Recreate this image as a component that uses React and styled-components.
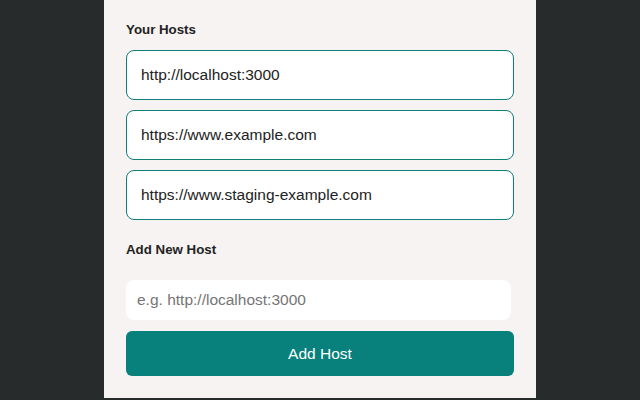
import React, { useState } from 'react';
import styled, { createGlobalStyle } from 'styled-components';

const GlobalStyle = createGlobalStyle`
body {
    margin: 0;
    background: #272b2c;
    font-family: "Liberation Sans", Arial, sans-serif;
}
`

export default function App() {
    const [hosts, setHosts] = useState([
        'http://localhost:3000',
        'https://www.example.com',
        'https://www.staging-example.com',
    ]);
    const [newHost, setNewHost] = useState('');

    const handleAdd = () => {
        if (!newHost) return
        setHosts([...hosts, newHost]);
        setNewHost('');
    };

    return (
        <>
            <GlobalStyle />
            <Panel>
                <SectionLabel>Your Hosts</SectionLabel>
                <HostList>
                    {hosts.map((host, index) => (
                        <HostItem key={index}>{host}</HostItem>
                    ))}
                </HostList>
                <SectionLabel spaced>Add New Host</SectionLabel>
                <HostInput
                    placeholder="e.g. http://localhost:3000"
                    value={newHost}
                    onChange={(e) => setNewHost(e.target.value)}
                />
                <AddButton onClick={handleAdd}>Add Host</AddButton>
            </Panel>
        </>
    )
}

const Panel = styled.div`
width: 432px;
height: 398px;
box-sizing: border-box;
margin: 0 auto;
padding: 20px 22px 22px;
background: #f7f3f2;
display: flex;
flex-direction: column;
`

const SectionLabel = styled.div`
font-size: 13.3px;
font-weight: 700;
line-height: 20px;
color: #222;
margin-top: ${props => props.spaced ? '20px' : '0'};
margin-bottom: ${props => props.spaced ? '20px' : '10px'};
`

const HostList = styled.div`
display: flex;
flex-direction: column;
gap: 10px;
`

const HostItem = styled.div`
height: 50px;
box-sizing: border-box;
display: flex;
align-items: center;
padding: 0 14px;
background: #fff;
border: 1px solid #0f7f7c;
border-radius: 8px;
font-size: 15.5px;
color: #222;
`

const HostInput = styled.input`
width: 385px;
height: 40px;
box-sizing: border-box;
padding: 0 11px;
border: none;
border-radius: 8px;
background: #fff;
font-family: "Liberation Sans", Arial, sans-serif;
font-size: 15.5px;
color: #222;
outline: none;

::placeholder {
    color: #777;
}
`

const AddButton = styled.button`
margin-top: 11px;
height: 45px;
border: none;
border-radius: 6px;
background: #08807b;
color: #fff;
font-family: "Liberation Sans", Arial, sans-serif;
font-size: 15.5px;
cursor: pointer;
`
